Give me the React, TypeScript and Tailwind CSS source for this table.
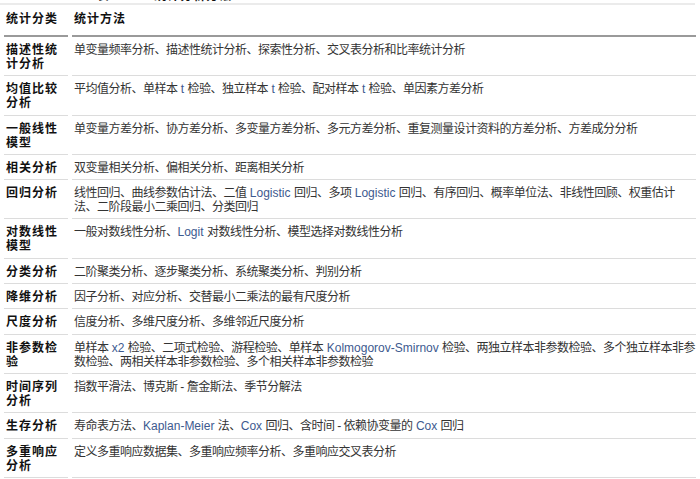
import React from "react";

type Row = { cat: string; lines: string[] };

const rows: Row[] = [
  { cat: "描述性统计分析", lines: ["单变量频率分析、描述性统计分析、探索性分析、交叉表分析和比率统计分析"] },
  { cat: "均值比较分析", lines: ["平均值分析、单样本 t 检验、独立样本 t 检验、配对样本 t 检验、单因素方差分析"] },
  { cat: "一般线性模型", lines: ["单变量方差分析、协方差分析、多变量方差分析、多元方差分析、重复测量设计资料的方差分析、方差成分分析"] },
  { cat: "相关分析", lines: ["双变量相关分析、偏相关分析、距离相关分析"] },
  {
    cat: "回归分析",
    lines: [
      "线性回归、曲线参数估计法、二值 Logistic 回归、多项 Logistic 回归、有序回归、概率单位法、非线性回顾、权重估计",
      "法、二阶段最小二乘回归、分类回归",
    ],
  },
  { cat: "对数线性模型", lines: ["一般对数线性分析、Logit 对数线性分析、模型选择对数线性分析"] },
  { cat: "分类分析", lines: ["二阶聚类分析、逐步聚类分析、系统聚类分析、判别分析"] },
  { cat: "降维分析", lines: ["因子分析、对应分析、交替最小二乘法的最有尺度分析"] },
  { cat: "尺度分析", lines: ["信度分析、多维尺度分析、多维邻近尺度分析"] },
  {
    cat: "非参数检验",
    lines: [
      "单样本 x2 检验、二项式检验、游程检验、单样本 Kolmogorov-Smirnov 检验、两独立样本非参数检验、多个独立样本非参",
      "数检验、两相关样本非参数检验、多个相关样本非参数检验",
    ],
  },
  { cat: "时间序列分析", lines: ["指数平滑法、博克斯 - 詹金斯法、季节分解法"] },
  { cat: "生存分析", lines: ["寿命表方法、Kaplan-Meier 法、Cox 回归、含时间 - 依赖协变量的 Cox 回归"] },
  { cat: "多重响应分析", lines: ["定义多重响应数据集、多重响应频率分析、多重响应交叉表分析"] },
];

function Colored({ text }: { text: string }) {
  const parts = text.split(/(\s*[A-Za-z][A-Za-z0-9\-]*\s*)/);
  return (
    <>
      {parts.map((p, i) =>
        /[A-Za-z]/.test(p) ? (
          <span key={i} className="text-[#3d5a8f] whitespace-pre">
            {p}
          </span>
        ) : (
          <span key={i} className="tracking-[-0.5px]">
            {p}
          </span>
        )
      )}
    </>
  );
}

export default function App() {
  return (
    <div
      className="w-[700px] h-[479px] overflow-hidden bg-white text-[12px] leading-[14px] text-[#333]"
      style={{ fontFamily: '"Liberation Sans", "Noto Sans CJK SC", sans-serif' }}
    >
      <div className="h-[3px] overflow-hidden flex items-end">
        <div className="flex items-end font-bold text-[#111] leading-[14px] whitespace-nowrap">
          <span>1</span>
          <span className="ml-[90px] tracking-[1px]">表 SPSS 统计分析方法</span>
        </div>
      </div>
      <div className="h-[2px] mr-[5px] bg-[#ebebeb]" />
      <table className="w-full table-fixed border-separate border-spacing-x-[4px] border-spacing-y-0">
        <colgroup>
          <col className="w-[64px]" />
          <col />
        </colgroup>
        <thead>
          <tr>
            <th className="text-left align-top font-bold text-[#111] tracking-[1px] pl-[2px] pt-[7px] pb-[9px] border-b-2 border-[#9a9a9a]">
              统计分类
            </th>
            <th className="text-left align-top font-bold text-[#111] tracking-[1px] pl-[2px] pt-[7px] pb-[9px] border-b-2 border-[#9a9a9a]">
              统计方法
            </th>
          </tr>
        </thead>
        <tbody>
          {rows.map((r) => (
            <tr key={r.cat}>
              <td className="align-top font-bold text-[#111] tracking-[1px] pl-[2px] pt-[6px] pb-[4.3px] border-b border-[#dcdcdc]">
                {r.cat}
              </td>
              <td className="align-top pl-[2px] pt-[6px] pb-[4.3px] border-b border-[#dcdcdc]">
                {r.lines.map((l, i) => (
                  <div key={i} className="whitespace-nowrap">
                    <Colored text={l} />
                  </div>
                ))}
              </td>
            </tr>
          ))}
        </tbody>
      </table>
    </div>
  );
}
